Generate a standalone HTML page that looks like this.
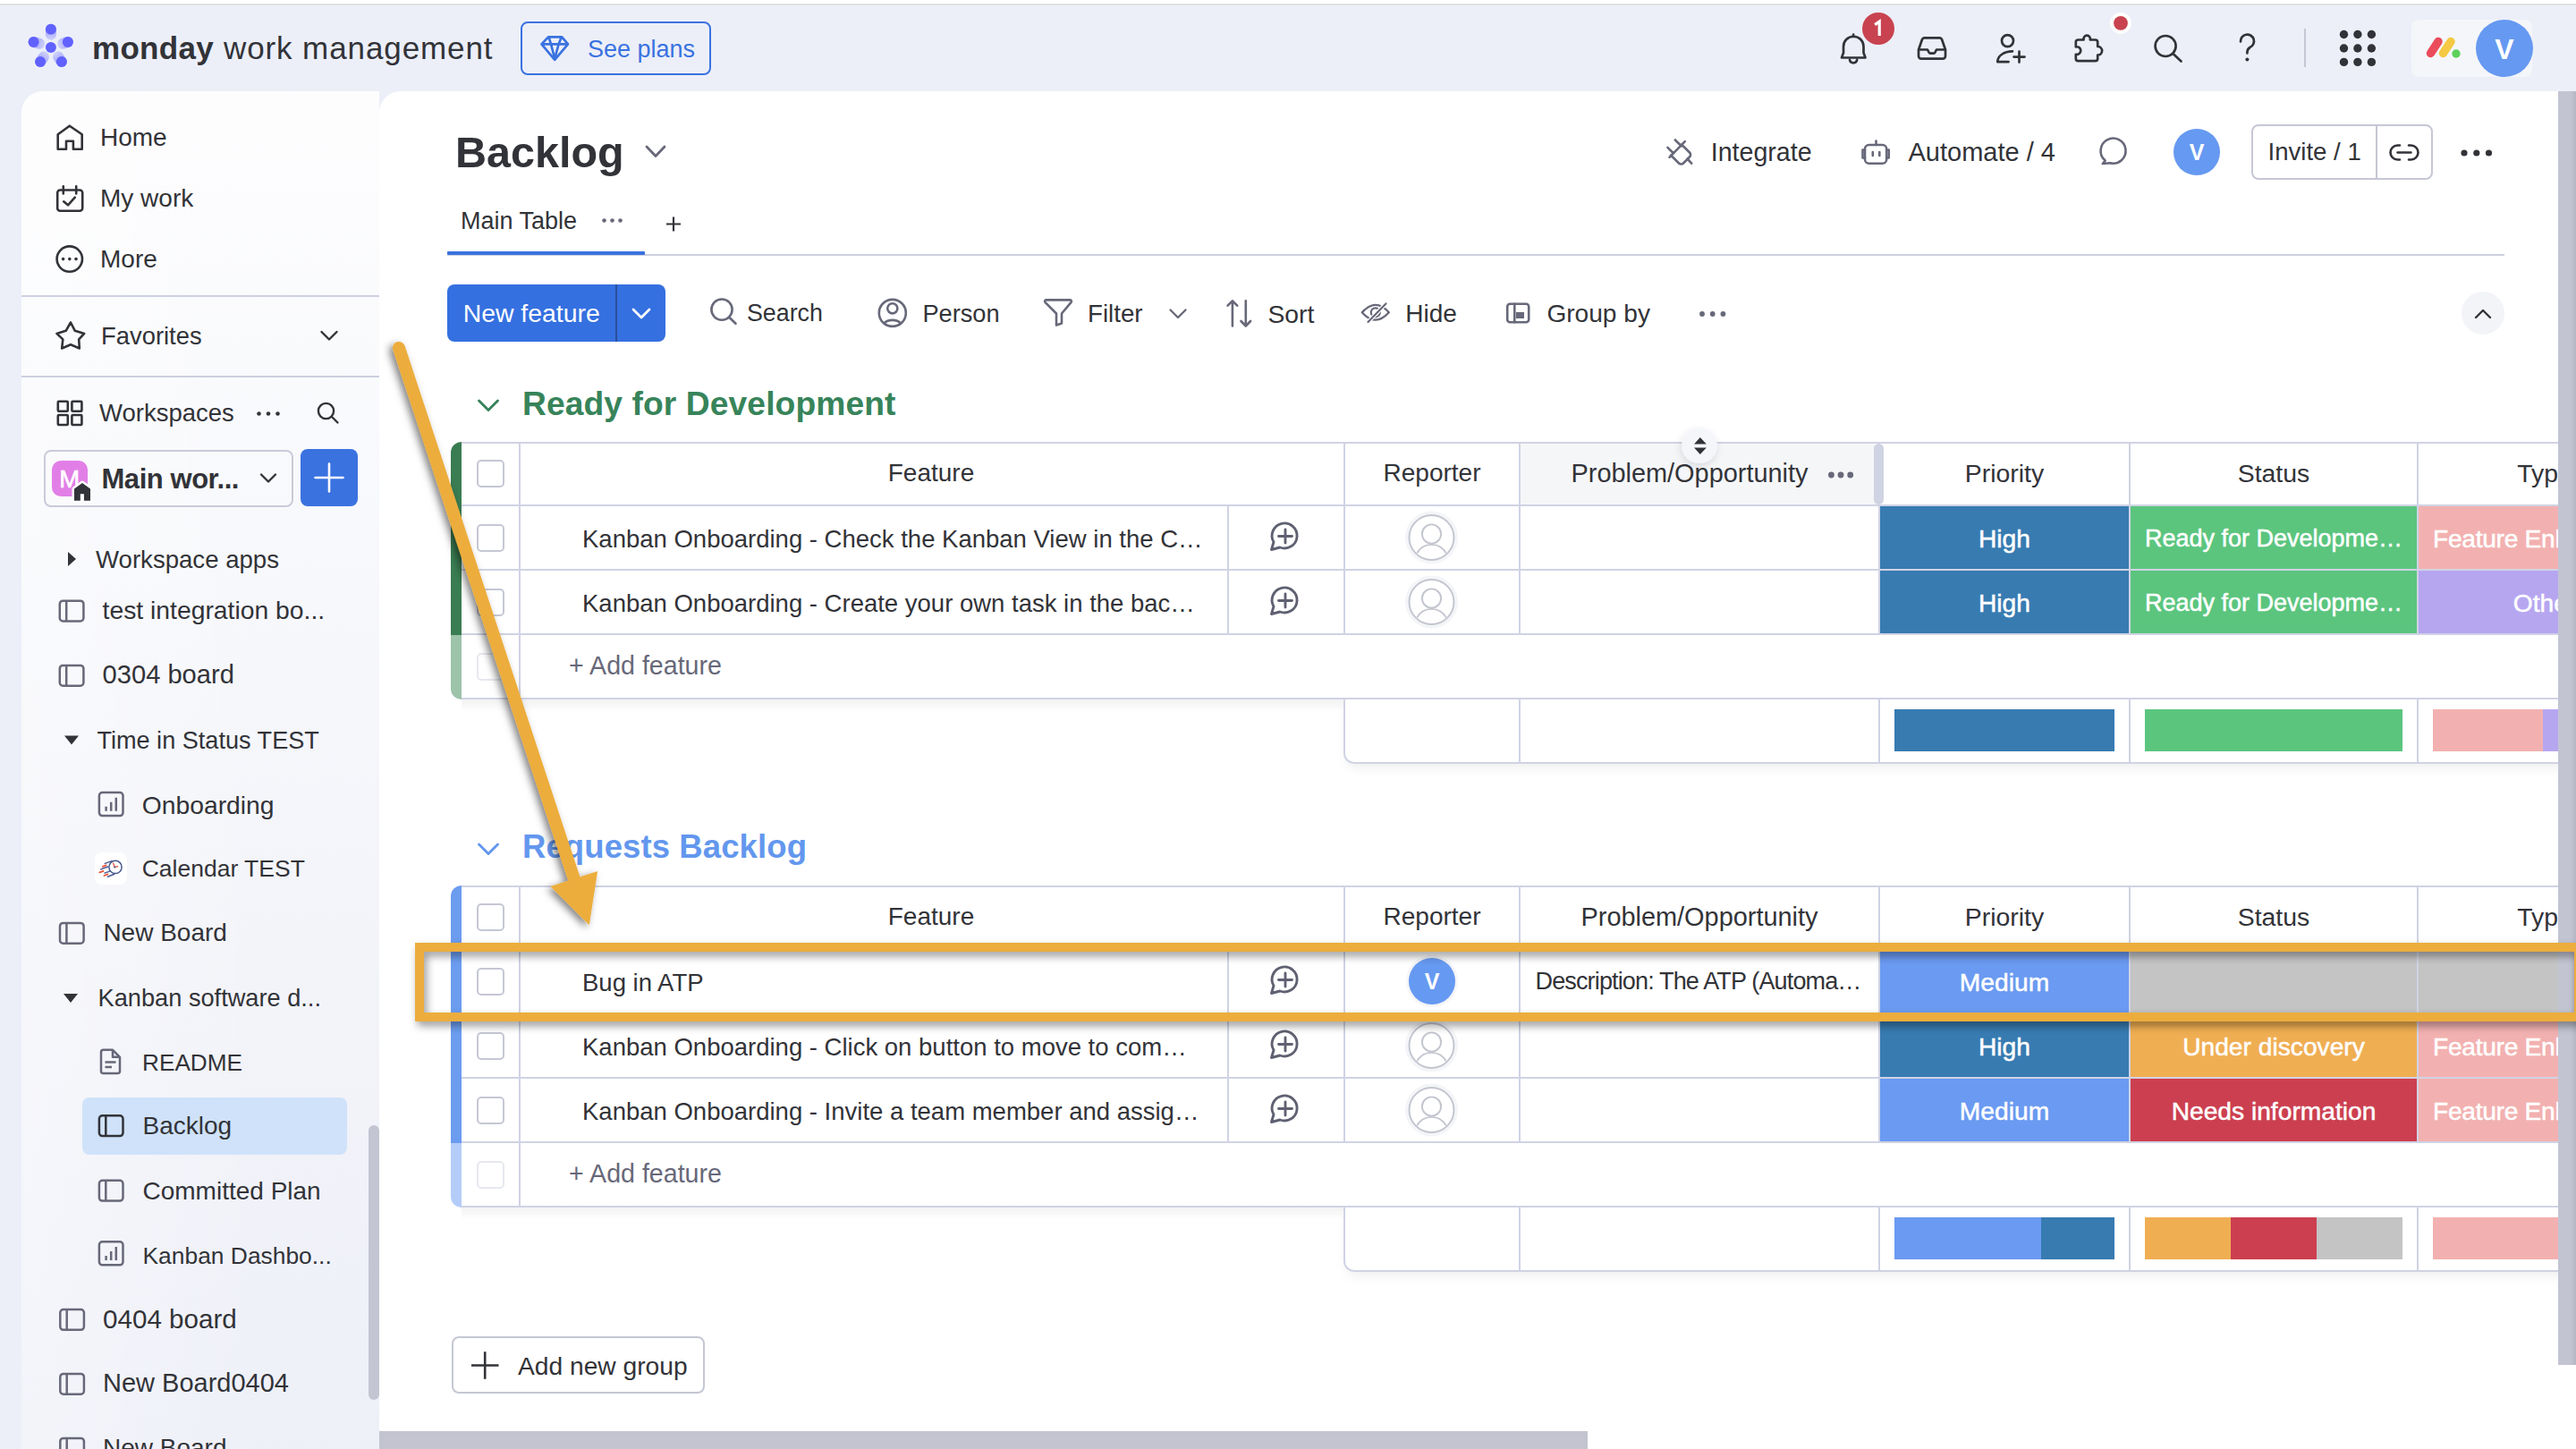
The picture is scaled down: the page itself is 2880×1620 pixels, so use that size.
<!DOCTYPE html>
<html><head><meta charset="utf-8"><title>Backlog</title>
<style>
html,body{margin:0;padding:0;}
body{width:2880px;height:1620px;overflow:hidden;position:relative;background:#eceff8;font-family:"Liberation Sans",sans-serif;}
.a{position:absolute;}
.t{position:absolute;white-space:nowrap;line-height:1;}
svg.ov{position:absolute;left:0;top:0;width:2880px;height:1620px;}
</style></head><body>
<div class="a" style="left:0.0px;top:0.0px;width:2880.0px;height:4.0px;background:#fff"></div>
<div class="a" style="left:0.0px;top:4.0px;width:2880.0px;height:2.0px;background:#dfe1e0"></div>
<div class="t" style="left:103.0px;top:35.9px;font-size:35px;font-weight:700;color:#323338;letter-spacing:0.3px">monday</div>
<div class="t" style="left:250.0px;top:35.9px;font-size:35px;font-weight:400;color:#323338;letter-spacing:0.9px">work management</div>
<div class="a" style="left:582.0px;top:24.0px;width:213.0px;height:60.0px;border:2px solid #3a72e0;border-radius:8px;box-sizing:border-box"></div>
<div class="t" style="left:657.0px;top:41.7px;font-size:27px;font-weight:400;color:#3a72e0;">See plans</div>
<div class="a" style="left:2082.1px;top:13.9px;width:36.0px;height:36.0px;background:#c8434f;border-radius:50%"></div>
<div class="a" style="left:2576.0px;top:32.0px;width:2.0px;height:43.0px;background:#c5c7d4"></div>
<div class="a" style="left:2696.0px;top:22.0px;width:135.0px;height:64.0px;background:#f5f6fa;border-radius:8px"></div>
<div class="a" style="left:2767.9px;top:22.0px;width:64.0px;height:64.0px;background:#6699f1;border-radius:50%"></div>
<div class="t" style="left:2200.0px;width:1200px;text-align:center;top:38.8px;font-size:32px;font-weight:700;color:#fff;">V</div>
<div class="a" style="left:24.0px;top:102.0px;width:400.0px;height:1518.0px;background:linear-gradient(90deg,rgba(255,255,255,0.3),rgba(255,255,255,0) 70%),linear-gradient(180deg,#fdfdfe 0%,#f8f9fc 30%,#f3f4f9 65%,#eef0f8 100%);border-top-left-radius:24px"></div>
<div class="a" style="left:424.0px;top:102.0px;width:2456.0px;height:1518.0px;background:#fff;border-top-left-radius:24px"></div>
<div class="t" style="left:112.0px;top:140.3px;font-size:28px;font-weight:400;color:#323338;">Home</div>
<div class="t" style="left:112.0px;top:208.3px;font-size:28px;font-weight:400;color:#323338;">My work</div>
<div class="t" style="left:112.0px;top:275.8px;font-size:28px;font-weight:400;color:#323338;">More</div>
<div class="a" style="left:24.0px;top:329.5px;width:400.0px;height:2.0px;background:#cdd0e0"></div>
<div class="t" style="left:113.0px;top:361.8px;font-size:27.4px;font-weight:400;color:#323338;">Favorites</div>
<div class="a" style="left:24.0px;top:420.0px;width:400.0px;height:2.0px;background:#cdd0e0"></div>
<div class="t" style="left:111.0px;top:447.7px;font-size:27.5px;font-weight:400;color:#323338;">Workspaces</div>
<div class="a" style="left:49.0px;top:503.0px;width:279.0px;height:64.0px;border:2px solid #c9cbd8;border-radius:8px;box-sizing:border-box"></div>
<div class="a" style="left:58.0px;top:515.0px;width:40.0px;height:40.0px;background:#e27fe7;border-radius:10px"></div>
<div class="t" style="left:66.3px;top:521.7px;font-size:27.5px;font-weight:400;color:#fff;-webkit-text-stroke:0.6px #fff">M</div>
<div class="t" style="left:113.5px;top:519.8px;font-size:31px;font-weight:700;color:#323338;letter-spacing:-0.45px">Main wor...</div>
<div class="a" style="left:336.0px;top:502.0px;width:64.0px;height:64.0px;background:#3a72e0;border-radius:8px"></div>
<div class="t" style="left:107.0px;top:611.6px;font-size:27.6px;font-weight:400;color:#323338;">Workspace apps</div>
<div class="t" style="left:114.6px;top:668.4px;font-size:28.3px;font-weight:400;color:#323338;">test integration bo...</div>
<div class="t" style="left:114.6px;top:739.9px;font-size:29.1px;font-weight:400;color:#323338;">0304 board</div>
<div class="t" style="left:108.4px;top:813.8px;font-size:27.1px;font-weight:400;color:#323338;">Time in Status TEST</div>
<div class="t" style="left:158.7px;top:885.7px;font-size:28.3px;font-weight:400;color:#323338;">Onboarding</div>
<div class="a" style="left:106.0px;top:953.0px;width:36.0px;height:36.0px;background:#fff;border-radius:8px"></div>
<div class="t" style="left:158.7px;top:958.2px;font-size:26.5px;font-weight:400;color:#323338;">Calendar TEST</div>
<div class="t" style="left:115.4px;top:1028.7px;font-size:28px;font-weight:400;color:#323338;">New Board</div>
<div class="t" style="left:109.6px;top:1102.0px;font-size:27.2px;font-weight:400;color:#323338;">Kanban software d...</div>
<div class="t" style="left:159.0px;top:1174.6px;font-size:26.2px;font-weight:400;color:#323338;">README</div>
<div class="a" style="left:92.0px;top:1227.0px;width:296.0px;height:64.0px;background:#cfe2fa;border-radius:8px"></div>
<div class="t" style="left:159.5px;top:1245.3px;font-size:28px;font-weight:400;color:#323338;">Backlog</div>
<div class="t" style="left:159.5px;top:1317.8px;font-size:28px;font-weight:400;color:#323338;">Committed Plan</div>
<div class="t" style="left:159.5px;top:1390.7px;font-size:26.4px;font-weight:400;color:#323338;">Kanban Dashbo...</div>
<div class="t" style="left:115.0px;top:1459.6px;font-size:29.6px;font-weight:400;color:#323338;">0404 board</div>
<div class="t" style="left:115.0px;top:1532.1px;font-size:29px;font-weight:400;color:#323338;">New Board0404</div>
<div class="t" style="left:115.0px;top:1604.9px;font-size:28px;font-weight:400;color:#323338;">New Board</div>
<div class="a" style="left:412.0px;top:1258.0px;width:12.0px;height:307.0px;background:#c3c5d3;border-radius:6px"></div>
<div class="t" style="left:509.0px;top:145.5px;font-size:48.5px;font-weight:700;color:#323338;letter-spacing:0px">Backlog</div>
<div class="t" style="left:1912.7px;top:156.4px;font-size:28.6px;font-weight:400;color:#323338;">Integrate</div>
<div class="t" style="left:2133.5px;top:156.1px;font-size:29px;font-weight:400;color:#323338;">Automate / 4</div>
<div class="a" style="left:2430.0px;top:143.9px;width:51.8px;height:51.8px;background:#6699f1;border-radius:50%"></div>
<div class="t" style="left:1856.0px;width:1200px;text-align:center;top:157.8px;font-size:25px;font-weight:700;color:#fff;">V</div>
<div class="a" style="left:2516.5px;top:138.6px;width:203.0px;height:62.5px;border:2px solid #c5c7d4;border-radius:8px;box-sizing:border-box"></div>
<div class="a" style="left:2656.0px;top:139.0px;width:2.0px;height:62.0px;background:#c5c7d4"></div>
<div class="t" style="left:2535.5px;top:156.2px;font-size:27.6px;font-weight:400;color:#323338;">Invite / 1</div>
<div class="t" style="left:515.0px;top:234.1px;font-size:27px;font-weight:400;color:#323338;">Main Table</div>
<div class="a" style="left:500.0px;top:284.0px;width:2300.0px;height:2.0px;background:#cdd0e0"></div>
<div class="a" style="left:500.0px;top:281.0px;width:221.0px;height:4.0px;background:#3a72e0;border-radius:1px"></div>
<div class="a" style="left:500.0px;top:318.0px;width:244.0px;height:64.0px;background:#3570e0;border-radius:8px"></div>
<div class="a" style="left:688.0px;top:318.0px;width:2.0px;height:64.0px;background:#2a4f9c"></div>
<div class="t" style="left:517.7px;top:336.0px;font-size:28.4px;font-weight:400;color:#fff;">New feature</div>
<div class="a" style="left:1695.4px;top:349.3px;width:9.1px;height:6.3px;background:#676879"></div>
<div class="t" style="left:835.0px;top:337.1px;font-size:26.8px;font-weight:400;color:#323338;">Search</div>
<div class="t" style="left:1031.4px;top:336.8px;font-size:27.2px;font-weight:400;color:#323338;">Person</div>
<div class="t" style="left:1216.0px;top:337.1px;font-size:27.7px;font-weight:400;color:#323338;">Filter</div>
<div class="t" style="left:1417.5px;top:336.5px;font-size:28.3px;font-weight:400;color:#323338;">Sort</div>
<div class="t" style="left:1571.3px;top:336.8px;font-size:28px;font-weight:400;color:#323338;">Hide</div>
<div class="t" style="left:1729.4px;top:336.7px;font-size:28.1px;font-weight:400;color:#323338;">Group by</div>
<div class="a" style="left:2752.0px;top:326.0px;width:48.0px;height:48.0px;background:#f3f4f8;border-radius:50%"></div>
<div class="t" style="left:584.0px;top:432.5px;font-size:37.2px;font-weight:700;color:#37845a;letter-spacing:0.1px">Ready for Development</div>
<div class="a" style="left:1502.0px;top:780.0px;width:1378.0px;height:74.0px;border:2px solid #d0d3e4;border-top:none;border-right:none;border-bottom-left-radius:12px;box-sizing:border-box;box-shadow:0 8px 14px -4px rgba(0,0,0,0.07)"></div>
<div class="a" style="left:516.0px;top:782.0px;width:986.0px;height:14.0px;background:linear-gradient(180deg,rgba(0,0,0,0.05),rgba(0,0,0,0))"></div>
<div class="a" style="left:1700.0px;top:496.0px;width:400.0px;height:68.0px;background:#f5f6f8"></div>
<div class="a" style="left:504.0px;top:494.0px;width:12.0px;height:216.0px;background:#3a7d52;border-top-left-radius:12px"></div>
<div class="a" style="left:504.0px;top:710.0px;width:12.0px;height:72.0px;background:#9dc3aa;border-bottom-left-radius:12px"></div>
<div class="a" style="left:516.0px;top:494.0px;width:2364.0px;height:2.0px;background:#d0d3e4"></div>
<div class="a" style="left:516.0px;top:564.0px;width:2364.0px;height:2.0px;background:#d0d3e4"></div>
<div class="a" style="left:516.0px;top:636.0px;width:2364.0px;height:2.0px;background:#d0d3e4"></div>
<div class="a" style="left:516.0px;top:708.0px;width:2364.0px;height:2.0px;background:#d0d3e4"></div>
<div class="a" style="left:516.0px;top:780.0px;width:2364.0px;height:2.0px;background:#d0d3e4"></div>
<div class="a" style="left:580.0px;top:494.0px;width:2.0px;height:286.0px;background:#d0d3e4"></div>
<div class="a" style="left:1372.0px;top:564.0px;width:2.0px;height:144.0px;background:#d0d3e4"></div>
<div class="a" style="left:1502.0px;top:494.0px;width:2.0px;height:216.0px;background:#d0d3e4"></div>
<div class="a" style="left:1698.0px;top:494.0px;width:2.0px;height:216.0px;background:#d0d3e4"></div>
<div class="a" style="left:1698.0px;top:780.0px;width:2.0px;height:72.0px;background:#d0d3e4"></div>
<div class="a" style="left:2100.0px;top:494.0px;width:2.0px;height:216.0px;background:#d0d3e4"></div>
<div class="a" style="left:2100.0px;top:780.0px;width:2.0px;height:72.0px;background:#d0d3e4"></div>
<div class="a" style="left:2380.0px;top:494.0px;width:2.0px;height:216.0px;background:#d0d3e4"></div>
<div class="a" style="left:2380.0px;top:780.0px;width:2.0px;height:72.0px;background:#d0d3e4"></div>
<div class="a" style="left:2702.0px;top:494.0px;width:2.0px;height:216.0px;background:#d0d3e4"></div>
<div class="a" style="left:2702.0px;top:780.0px;width:2.0px;height:72.0px;background:#d0d3e4"></div>
<div class="a" style="left:532.5px;top:513.5px;width:31.0px;height:31.0px;border:2px solid #c5c7d4;border-radius:5px;box-sizing:border-box;background:#fff"></div>
<div class="t" style="left:441.0px;width:1200px;text-align:center;top:515.3px;font-size:28px;font-weight:400;color:#323338;">Feature</div>
<div class="t" style="left:1001.0px;width:1200px;text-align:center;top:515.3px;font-size:28px;font-weight:400;color:#323338;">Reporter</div>
<div class="t" style="left:1756.5px;top:515.0px;font-size:28.9px;font-weight:400;color:#323338;">Problem/Opportunity</div>
<div class="a" style="left:2094.5px;top:496.0px;width:11.5px;height:67.5px;background:#d0d3e3;border-radius:6px"></div>
<div class="t" style="left:1641.0px;width:1200px;text-align:center;top:515.0px;font-size:28.4px;font-weight:400;color:#323338;">Priority</div>
<div class="t" style="left:1942.0px;width:1200px;text-align:center;top:515.0px;font-size:28.4px;font-weight:400;color:#323338;">Status</div>
<div class="t" style="left:2245.0px;width:1200px;text-align:center;top:515.0px;font-size:28.4px;font-weight:400;color:#323338;">Type</div>
<div class="a" style="left:532.5px;top:585.5px;width:31.0px;height:31.0px;border:2px solid #c5c7d4;border-radius:5px;box-sizing:border-box;background:#fff"></div>
<div class="t" style="left:651.0px;top:588.7px;font-size:27.5px;font-weight:400;color:#323338;">Kanban Onboarding - Check the Kanban View in the C…</div>
<div class="a" style="left:2102.0px;top:566.0px;width:278.0px;height:70.0px;background:#377bb1"></div>
<div class="t" style="left:1641.0px;width:1200px;text-align:center;top:587.6px;font-size:28.2px;font-weight:400;color:#fff;-webkit-text-stroke:0.5px #fff">High</div>
<div class="a" style="left:2382.0px;top:566.0px;width:320.0px;height:70.0px;background:#5bc57e"></div>
<div class="t" style="left:1942.0px;width:1200px;text-align:center;top:588.6px;font-size:27px;font-weight:400;color:#fff;-webkit-text-stroke:0.5px #fff">Ready for Developme…</div>
<div class="a" style="left:2704.0px;top:566.0px;width:176.0px;height:70.0px;background:#f2b1b0"></div>
<div class="t" style="left:2720.0px;top:587.6px;font-size:28.2px;font-weight:400;color:#fff;-webkit-text-stroke:0.5px #fff;letter-spacing:-0.3px">Feature Enh</div>
<div class="a" style="left:532.5px;top:657.5px;width:31.0px;height:31.0px;border:2px solid #c5c7d4;border-radius:5px;box-sizing:border-box;background:#fff"></div>
<div class="t" style="left:651.0px;top:660.7px;font-size:27.5px;font-weight:400;color:#323338;">Kanban Onboarding - Create your own task in the bac…</div>
<div class="a" style="left:2102.0px;top:638.0px;width:278.0px;height:70.0px;background:#377bb1"></div>
<div class="t" style="left:1641.0px;width:1200px;text-align:center;top:659.6px;font-size:28.2px;font-weight:400;color:#fff;-webkit-text-stroke:0.5px #fff">High</div>
<div class="a" style="left:2382.0px;top:638.0px;width:320.0px;height:70.0px;background:#5bc57e"></div>
<div class="t" style="left:1942.0px;width:1200px;text-align:center;top:660.6px;font-size:27px;font-weight:400;color:#fff;-webkit-text-stroke:0.5px #fff">Ready for Developme…</div>
<div class="a" style="left:2704.0px;top:638.0px;width:176.0px;height:70.0px;background:#b6a6f0"></div>
<div class="t" style="left:2245.0px;width:1200px;text-align:center;top:659.6px;font-size:28.2px;font-weight:400;color:#fff;-webkit-text-stroke:0.5px #fff">Other</div>
<div class="a" style="left:532.5px;top:729.5px;width:31.0px;height:31.0px;border:2px solid #e6e8ef;border-radius:5px;box-sizing:border-box;background:#fff"></div>
<div class="t" style="left:636.0px;top:729.8px;font-size:28.6px;font-weight:400;color:#676879;">+ Add feature</div>
<div class="a" style="left:2118.0px;top:792.8px;width:246.0px;height:47.5px;background:#377bb1"></div>
<div class="a" style="left:2398.0px;top:792.8px;width:288.0px;height:47.5px;background:#5bc57e"></div>
<div class="a" style="left:2720.0px;top:792.8px;width:123.0px;height:47.5px;background:#f2b1b0"></div>
<div class="a" style="left:2843.0px;top:792.8px;width:40.0px;height:47.5px;background:#b6a6f0"></div>
<div class="t" style="left:584.0px;top:929.1px;font-size:36.5px;font-weight:700;color:#6397ee;letter-spacing:0.1px">Requests Backlog</div>
<div class="a" style="left:1502.0px;top:1348.0px;width:1378.0px;height:74.0px;border:2px solid #d0d3e4;border-top:none;border-right:none;border-bottom-left-radius:12px;box-sizing:border-box;box-shadow:0 8px 14px -4px rgba(0,0,0,0.07)"></div>
<div class="a" style="left:516.0px;top:1350.0px;width:986.0px;height:14.0px;background:linear-gradient(180deg,rgba(0,0,0,0.05),rgba(0,0,0,0))"></div>
<div class="a" style="left:504.0px;top:990.0px;width:12.0px;height:288.0px;background:#6b9cf0;border-top-left-radius:12px"></div>
<div class="a" style="left:504.0px;top:1278.0px;width:12.0px;height:72.0px;background:#b4cdf8;border-bottom-left-radius:12px"></div>
<div class="a" style="left:516.0px;top:990.0px;width:2364.0px;height:2.0px;background:#d0d3e4"></div>
<div class="a" style="left:516.0px;top:1060.0px;width:2364.0px;height:2.0px;background:#d0d3e4"></div>
<div class="a" style="left:516.0px;top:1132.0px;width:2364.0px;height:2.0px;background:#d0d3e4"></div>
<div class="a" style="left:516.0px;top:1204.0px;width:2364.0px;height:2.0px;background:#d0d3e4"></div>
<div class="a" style="left:516.0px;top:1276.0px;width:2364.0px;height:2.0px;background:#d0d3e4"></div>
<div class="a" style="left:516.0px;top:1348.0px;width:2364.0px;height:2.0px;background:#d0d3e4"></div>
<div class="a" style="left:580.0px;top:990.0px;width:2.0px;height:358.0px;background:#d0d3e4"></div>
<div class="a" style="left:1372.0px;top:1060.0px;width:2.0px;height:216.0px;background:#d0d3e4"></div>
<div class="a" style="left:1502.0px;top:990.0px;width:2.0px;height:288.0px;background:#d0d3e4"></div>
<div class="a" style="left:1698.0px;top:990.0px;width:2.0px;height:288.0px;background:#d0d3e4"></div>
<div class="a" style="left:1698.0px;top:1348.0px;width:2.0px;height:72.0px;background:#d0d3e4"></div>
<div class="a" style="left:2100.0px;top:990.0px;width:2.0px;height:288.0px;background:#d0d3e4"></div>
<div class="a" style="left:2100.0px;top:1348.0px;width:2.0px;height:72.0px;background:#d0d3e4"></div>
<div class="a" style="left:2380.0px;top:990.0px;width:2.0px;height:288.0px;background:#d0d3e4"></div>
<div class="a" style="left:2380.0px;top:1348.0px;width:2.0px;height:72.0px;background:#d0d3e4"></div>
<div class="a" style="left:2702.0px;top:990.0px;width:2.0px;height:288.0px;background:#d0d3e4"></div>
<div class="a" style="left:2702.0px;top:1348.0px;width:2.0px;height:72.0px;background:#d0d3e4"></div>
<div class="a" style="left:532.5px;top:1009.5px;width:31.0px;height:31.0px;border:2px solid #c5c7d4;border-radius:5px;box-sizing:border-box;background:#fff"></div>
<div class="t" style="left:441.0px;width:1200px;text-align:center;top:1011.3px;font-size:28px;font-weight:400;color:#323338;">Feature</div>
<div class="t" style="left:1001.0px;width:1200px;text-align:center;top:1011.3px;font-size:28px;font-weight:400;color:#323338;">Reporter</div>
<div class="t" style="left:1300.0px;width:1200px;text-align:center;top:1011.0px;font-size:28.9px;font-weight:400;color:#323338;">Problem/Opportunity</div>
<div class="t" style="left:1641.0px;width:1200px;text-align:center;top:1011.0px;font-size:28.4px;font-weight:400;color:#323338;">Priority</div>
<div class="t" style="left:1942.0px;width:1200px;text-align:center;top:1011.0px;font-size:28.4px;font-weight:400;color:#323338;">Status</div>
<div class="t" style="left:2245.0px;width:1200px;text-align:center;top:1011.0px;font-size:28.4px;font-weight:400;color:#323338;">Type</div>
<div class="a" style="left:532.5px;top:1081.5px;width:31.0px;height:31.0px;border:2px solid #c5c7d4;border-radius:5px;box-sizing:border-box;background:#fff"></div>
<div class="t" style="left:651.0px;top:1084.7px;font-size:27.5px;font-weight:400;color:#323338;">Bug in ATP</div>
<div class="a" style="left:1571.8px;top:1068.0px;width:58.0px;height:58.0px;background:#f4f5f8;border-radius:50%"></div>
<div class="a" style="left:1575.0px;top:1071.2px;width:51.6px;height:51.6px;background:#6699f1;border-radius:50%"></div>
<div class="t" style="left:1001.0px;width:1200px;text-align:center;top:1084.8px;font-size:25px;font-weight:700;color:#fff;">V</div>
<div class="t" style="left:1716.5px;top:1083.6px;font-size:27px;font-weight:400;color:#323338;letter-spacing:-0.85px">Description: The ATP (Automa…</div>
<div class="a" style="left:2102.0px;top:1062.0px;width:278.0px;height:70.0px;background:#6a9af1"></div>
<div class="t" style="left:1641.0px;width:1200px;text-align:center;top:1083.6px;font-size:28.2px;font-weight:400;color:#fff;-webkit-text-stroke:0.5px #fff">Medium</div>
<div class="a" style="left:2382.0px;top:1062.0px;width:320.0px;height:70.0px;background:#c4c4c4"></div>
<div class="a" style="left:2704.0px;top:1062.0px;width:176.0px;height:70.0px;background:#c4c4c4"></div>
<div class="a" style="left:532.5px;top:1153.5px;width:31.0px;height:31.0px;border:2px solid #c5c7d4;border-radius:5px;box-sizing:border-box;background:#fff"></div>
<div class="t" style="left:651.0px;top:1156.7px;font-size:27.5px;font-weight:400;color:#323338;">Kanban Onboarding - Click on button to move to com…</div>
<div class="a" style="left:2102.0px;top:1134.0px;width:278.0px;height:70.0px;background:#377bb1"></div>
<div class="t" style="left:1641.0px;width:1200px;text-align:center;top:1155.6px;font-size:28.2px;font-weight:400;color:#fff;-webkit-text-stroke:0.5px #fff">High</div>
<div class="a" style="left:2382.0px;top:1134.0px;width:320.0px;height:70.0px;background:#f0ae53"></div>
<div class="t" style="left:1942.0px;width:1200px;text-align:center;top:1155.6px;font-size:28.2px;font-weight:400;color:#fff;-webkit-text-stroke:0.5px #fff">Under discovery</div>
<div class="a" style="left:2704.0px;top:1134.0px;width:176.0px;height:70.0px;background:#f2b1b0"></div>
<div class="t" style="left:2720.0px;top:1155.6px;font-size:28.2px;font-weight:400;color:#fff;-webkit-text-stroke:0.5px #fff;letter-spacing:-0.3px">Feature Enh</div>
<div class="a" style="left:532.5px;top:1225.5px;width:31.0px;height:31.0px;border:2px solid #c5c7d4;border-radius:5px;box-sizing:border-box;background:#fff"></div>
<div class="t" style="left:651.0px;top:1228.7px;font-size:27.5px;font-weight:400;color:#323338;">Kanban Onboarding - Invite a team member and assig…</div>
<div class="a" style="left:2102.0px;top:1206.0px;width:278.0px;height:70.0px;background:#6a9af1"></div>
<div class="t" style="left:1641.0px;width:1200px;text-align:center;top:1227.6px;font-size:28.2px;font-weight:400;color:#fff;-webkit-text-stroke:0.5px #fff">Medium</div>
<div class="a" style="left:2382.0px;top:1206.0px;width:320.0px;height:70.0px;background:#cc3f50"></div>
<div class="t" style="left:1942.0px;width:1200px;text-align:center;top:1227.6px;font-size:28.2px;font-weight:400;color:#fff;-webkit-text-stroke:0.5px #fff">Needs information</div>
<div class="a" style="left:2704.0px;top:1206.0px;width:176.0px;height:70.0px;background:#f2b1b0"></div>
<div class="t" style="left:2720.0px;top:1227.6px;font-size:28.2px;font-weight:400;color:#fff;-webkit-text-stroke:0.5px #fff;letter-spacing:-0.3px">Feature Enh</div>
<div class="a" style="left:532.5px;top:1297.5px;width:31.0px;height:31.0px;border:2px solid #e6e8ef;border-radius:5px;box-sizing:border-box;background:#fff"></div>
<div class="t" style="left:636.0px;top:1297.8px;font-size:28.6px;font-weight:400;color:#676879;">+ Add feature</div>
<div class="a" style="left:2118.0px;top:1360.8px;width:164.0px;height:47.5px;background:#6a9af1"></div>
<div class="a" style="left:2282.0px;top:1360.8px;width:82.0px;height:47.5px;background:#377bb1"></div>
<div class="a" style="left:2398.0px;top:1360.8px;width:96.0px;height:47.5px;background:#f0ae53"></div>
<div class="a" style="left:2494.0px;top:1360.8px;width:96.0px;height:47.5px;background:#cc3f50"></div>
<div class="a" style="left:2590.0px;top:1360.8px;width:96.0px;height:47.5px;background:#c4c4c4"></div>
<div class="a" style="left:2720.0px;top:1360.8px;width:163.0px;height:47.5px;background:#f2b1b0"></div>
<div class="a" style="left:504.5px;top:1494.4px;width:283.5px;height:63.5px;border:2px solid #c5c7d4;border-radius:8px;box-sizing:border-box;background:#fff"></div>
<div class="t" style="left:579.0px;top:1513.1px;font-size:28.2px;font-weight:400;color:#323338;">Add new group</div>
<div class="a" style="left:424.0px;top:1600.0px;width:1351.0px;height:20.0px;background:#c3c4d0"></div>
<div class="a" style="left:2860.0px;top:102.0px;width:20.0px;height:1424.0px;background:linear-gradient(90deg,#c2c4d2 70%,#b5b6c4)"></div>
<svg class="ov" width="2880" height="1620" viewBox="0 0 2880 1620">
<defs>
<linearGradient id="lg" x1="0" y1="0" x2="1" y2="0"><stop offset="0" stop-color="#6161ff" stop-opacity="0.2"/><stop offset="1" stop-color="#6161ff" stop-opacity="0.6"/></linearGradient>
<filter id="sh" x="-50%" y="-50%" width="200%" height="200%"><feDropShadow dx="-1" dy="3" stdDeviation="4" flood-color="#000" flood-opacity="0.12"/></filter>
<filter id="osh" x="-5%" y="-50%" width="110%" height="200%"><feDropShadow dx="3" dy="5" stdDeviation="5" flood-color="#000" flood-opacity="0.4"/></filter>
<filter id="ash" x="-50%" y="-10%" width="200%" height="120%"><feDropShadow dx="-3.5" dy="3" stdDeviation="4.5" flood-color="#000" flood-opacity="0.5"/></filter>
</defs>
<defs>
<linearGradient id="lt0" gradientUnits="userSpaceOnUse" x1="56.9" y1="32.8" x2="56.90" y2="44.80"><stop offset="0" stop-color="#6161ff" stop-opacity="0.55"/><stop offset="1" stop-color="#6161ff" stop-opacity="0.2"/></linearGradient>
<linearGradient id="lt1" gradientUnits="userSpaceOnUse" x1="37.6" y1="46.9" x2="50.07" y2="50.44"><stop offset="0" stop-color="#6161ff" stop-opacity="0.55"/><stop offset="1" stop-color="#6161ff" stop-opacity="0.2"/></linearGradient>
<linearGradient id="lt2" gradientUnits="userSpaceOnUse" x1="75.9" y1="46.9" x2="64.40" y2="50.67"><stop offset="0" stop-color="#6161ff" stop-opacity="0.55"/><stop offset="1" stop-color="#6161ff" stop-opacity="0.2"/></linearGradient>
<linearGradient id="lt3" gradientUnits="userSpaceOnUse" x1="45.1" y1="69.1" x2="52.43" y2="58.58"><stop offset="0" stop-color="#6161ff" stop-opacity="0.55"/><stop offset="1" stop-color="#6161ff" stop-opacity="0.2"/></linearGradient>
<linearGradient id="lt4" gradientUnits="userSpaceOnUse" x1="68.9" y1="69.1" x2="61.57" y2="58.58"><stop offset="0" stop-color="#6161ff" stop-opacity="0.55"/><stop offset="1" stop-color="#6161ff" stop-opacity="0.2"/></linearGradient>
</defs>
<line x1="56.9" y1="32.8" x2="56.9" y2="38.8" stroke="url(#lt0)" stroke-width="12" stroke-linecap="round"/>
<line x1="37.6" y1="46.9" x2="44.3" y2="48.8" stroke="url(#lt1)" stroke-width="12" stroke-linecap="round"/>
<line x1="75.9" y1="46.9" x2="70.1" y2="48.8" stroke="url(#lt2)" stroke-width="12" stroke-linecap="round"/>
<line x1="45.1" y1="69.1" x2="49" y2="63.5" stroke="url(#lt3)" stroke-width="12" stroke-linecap="round"/>
<line x1="68.9" y1="69.1" x2="65" y2="63.5" stroke="url(#lt4)" stroke-width="12" stroke-linecap="round"/>
<circle cx="56.9" cy="32.8" r="6" fill="#6161ff"/>
<circle cx="37.6" cy="46.9" r="6" fill="#6161ff"/>
<circle cx="75.9" cy="46.9" r="6" fill="#6161ff"/>
<circle cx="45.1" cy="69.1" r="6" fill="#6161ff"/>
<circle cx="68.9" cy="69.1" r="6" fill="#6161ff"/>
<circle cx="56.9" cy="52.9" r="6" fill="#6161ff"/>
<g fill="none" stroke="#3a72e0" stroke-width="2.7" stroke-linejoin="round"><path d="M605.5 49.4 L613 41.3 H628.2 L635 49.4 L620.2 66.8 Z M605.5 49.4 H635 M613.5 41.5 L616 49.4 L620.2 65.5 M627.7 41.5 L624.6 49.4 L620.2 65.5"/></g>
<g fill="none" stroke="#323338" stroke-width="2.7" stroke-linecap="round" stroke-linejoin="round">
<path d="M2059 64.5 H2085.5 L2083.5 59 V52 A11.2 11.2 0 0 0 2061 52 V59 Z M2072.1 38.6 V41 M2068 67 A4.2 4.2 0 0 0 2076.2 67"/>
<path d="M2151.5 42.3 H2168.5 A2.5 2.5 0 0 1 2171 44 L2175 55.5 V62.5 A3 3 0 0 1 2172 65.6 H2148 A3 3 0 0 1 2145 62.5 V55.5 L2149 44 A2.5 2.5 0 0 1 2151.5 42.3 Z M2145.5 55.5 H2155 L2156.5 58.5 A2 2 0 0 0 2158.3 59.6 H2161.7 A2 2 0 0 0 2163.5 58.5 L2165 55.5 H2174.5"/>
<circle cx="2244.5" cy="45.6" r="6.5"/><path d="M2245.5 69.2 H2233.3 A16.5 11.7 0 0 1 2250 57.3 M2251.5 63.6 H2263.5 M2257.5 57.6 V69.6"/>
<path d="M2323.5 44.5 H2329.6 A3.75 3.75 0 1 1 2336.8 44.5 H2342.5 A2.7 2.7 0 0 1 2345.2 47.2 V51.9 A4.9 4.9 0 0 1 2345.2 61.7 V65.5 A2.7 2.7 0 0 1 2342.5 68.2 H2323.5 A2.7 2.7 0 0 1 2320.8 65.5 V60.8 A4.35 4.35 0 1 0 2320.8 52.4 V47.2 A2.7 2.7 0 0 1 2323.5 44.5 Z"/>
<circle cx="2421.1" cy="51.5" r="11.5"/><path d="M2429.5 60 L2438.5 68.5"/>
<path d="M2505 46.5 A7.5 7.5 0 1 1 2515.5 53 Q2512.4 55 2512.4 58.5 V59.5"/>
</g>
<circle cx="2512.4" cy="66.4" r="2" fill="#323338"/>
<path d="M2096.2 27.6 L2101.2 24 V40" fill="none" stroke="#fff" stroke-width="3.2" stroke-linejoin="miter"/>
<circle cx="2371" cy="25.8" r="11.9" fill="#fff"/><circle cx="2371" cy="25.8" r="7.9" fill="#c8434f"/>
<circle cx="2620.5" cy="38.5" r="4.7" fill="#323338"/>
<circle cx="2635.9" cy="38.5" r="4.7" fill="#323338"/>
<circle cx="2651.4" cy="38.5" r="4.7" fill="#323338"/>
<circle cx="2620.5" cy="54" r="4.7" fill="#323338"/>
<circle cx="2635.9" cy="54" r="4.7" fill="#323338"/>
<circle cx="2651.4" cy="54" r="4.7" fill="#323338"/>
<circle cx="2620.5" cy="69.4" r="4.7" fill="#323338"/>
<circle cx="2635.9" cy="69.4" r="4.7" fill="#323338"/>
<circle cx="2651.4" cy="69.4" r="4.7" fill="#323338"/>
<g stroke-linecap="round" stroke-width="9.5"><line x1="2717.5" y1="59.5" x2="2726" y2="46.5" stroke="#ea4c5b"/><line x1="2731.5" y1="59.5" x2="2740" y2="46.5" stroke="#f5c942"/></g><circle cx="2746" cy="60" r="4.7" fill="#5dd05c"/>
<g fill="none" stroke="#323338" stroke-width="2.6" stroke-linecap="round" stroke-linejoin="round">
<path d="M64.7 166.7 V150.2 L77.8 140.7 L91.7 150.2 V166.7 H81.9 V157.8 H74 V166.7 Z"/>
<rect x="64.2" y="212.5" width="28" height="23.3" rx="3"/><path d="M70.8 208.3 V216.5 M85.2 208.3 V216.5 M71.2 225.3 L76 229.3 L83.8 220.7"/>
<circle cx="77.8" cy="289.6" r="14.2"/>
<path d="M79 360.5 L83.8 369.8 L94.2 372.9 L88.2 379.4 L88.8 389.5 L79 385.3 L69.2 389.5 L70.3 379.4 L63.4 372.9 L73.7 369.8 Z"/>
<rect x="64.8" y="448.8" width="11" height="11" rx="1"/><rect x="80.4" y="448.8" width="11" height="11" rx="1"/><rect x="64.8" y="464" width="11" height="11" rx="1"/><rect x="80.4" y="464" width="11" height="11" rx="1"/>
<path d="M359.5 371 L368 379.5 L376.5 371" stroke-width="2.4"/>
<path d="M292 530.5 L300 538.5 L308 530.5" stroke-width="2.4"/>
<circle cx="364.5" cy="459.5" r="8.6" stroke-width="2.4"/><path d="M371 466 L377.5 472.5" stroke-width="2.4"/>
</g>
<circle cx="289.5" cy="462.5" r="2.3" fill="#323338"/>
<circle cx="300" cy="462.5" r="2.3" fill="#323338"/>
<circle cx="310.5" cy="462.5" r="2.3" fill="#323338"/>
<circle cx="70.6" cy="289.6" r="1.8" fill="#323338"/>
<circle cx="77.8" cy="289.6" r="1.8" fill="#323338"/>
<circle cx="85" cy="289.6" r="1.8" fill="#323338"/>
<path d="M83 559.7 V546.6 L92 540.1 L101 546.6 V559.7 H93.9 V552.2 H89.8 V559.7 Z" fill="#323338" stroke="#fff" stroke-width="5" stroke-linejoin="round" paint-order="stroke"/>
<path d="M352.5 534 H383.5 M368 518.5 V549.5" stroke="#fff" stroke-width="2.6" stroke-linecap="round"/>
<path d="M76 617 L85 625 L76 633 Z" fill="#323338"/>
<g fill="none" stroke="#676879" stroke-width="2.5"><rect x="66.8" y="671.6999999999999" width="26.6" height="22.8" rx="3.5"/><path d="M74.2 671.6999999999999 V694.5"/></g>
<g fill="none" stroke="#676879" stroke-width="2.5"><rect x="66.8" y="743.9" width="26.6" height="22.8" rx="3.5"/><path d="M74.2 743.9 V766.7"/></g>
<path d="M72 822.6 L88 822.6 L80 832.6 Z" fill="#323338"/>
<g fill="none" stroke="#676879" stroke-width="2.5"><rect x="110.89999999999999" y="886.0999999999999" width="26.6" height="26" rx="3.5"/><path d="M118.6 906.8 V901.8 M124.19999999999999 906.8 V896.8 M129.79999999999998 906.8 V891.8"/></g>
<g fill="none" stroke-linecap="round"><path d="M117.3 965.4 L125 962.6 M112.8 971.9 L120.6 969 M116.9 976.1 L122.6 974.1 M120.4 980.2 L127.8 977.2" stroke="#4a5a8f" stroke-width="1.5"/><circle cx="129" cy="969.4" r="7.1" fill="#fff" stroke="#4a5a8f" stroke-width="1.5"/><path d="M114.8 968.8 L118.6 967.4 M111.4 975.4 L115.5 973.8 M116.4 979 L120.5 977.4" stroke="#e8553a" stroke-width="1.8"/><path d="M126.6 965.2 L128.3 969.5 L131.6 968.6" stroke="#e8553a" stroke-width="1.3"/><circle cx="128.3" cy="969.5" r="1.1" fill="#4a5a8f"/></g>
<g fill="none" stroke="#676879" stroke-width="2.5"><rect x="67.0" y="1031.8999999999999" width="26.6" height="22.8" rx="3.5"/><path d="M74.4 1031.8999999999999 V1054.6999999999998"/></g>
<path d="M71 1111 L87 1111 L79 1121 Z" fill="#323338"/>
<g fill="none" stroke="#676879" stroke-width="2.5" stroke-linejoin="round"><path d="M115 1173.8 H126 L134 1181.8 V1197.5 A2.5 2.5 0 0 1 131.5 1200 H115.5 A2.5 2.5 0 0 1 113 1197.5 V1176.3 A2.5 2.5 0 0 1 115.5 1173.8 Z M126 1173.8 V1181.8 H134"/><path d="M117.5 1187.5 H129.5 M117.5 1193 H125"/></g>
<g fill="none" stroke="#323338" stroke-width="2.5"><rect x="110.89999999999999" y="1247.3" width="26.6" height="22.8" rx="3.5"/><path d="M118.3 1247.3 V1270.1"/></g>
<g fill="none" stroke="#676879" stroke-width="2.5"><rect x="110.89999999999999" y="1319.8" width="26.6" height="22.8" rx="3.5"/><path d="M118.3 1319.8 V1342.6"/></g>
<g fill="none" stroke="#676879" stroke-width="2.5"><rect x="110.89999999999999" y="1388.3" width="26.6" height="26" rx="3.5"/><path d="M118.6 1409 V1404 M124.19999999999999 1409 V1399 M129.79999999999998 1409 V1394"/></g>
<g fill="none" stroke="#676879" stroke-width="2.5"><rect x="67.3" y="1464.0" width="26.6" height="22.8" rx="3.5"/><path d="M74.7 1464.0 V1486.8"/></g>
<g fill="none" stroke="#676879" stroke-width="2.5"><rect x="67.3" y="1535.8999999999999" width="26.6" height="22.8" rx="3.5"/><path d="M74.7 1535.8999999999999 V1558.6999999999998"/></g>
<g fill="none" stroke="#676879" stroke-width="2.5"><rect x="67.3" y="1607.8999999999999" width="26.6" height="22.8" rx="3.5"/><path d="M74.7 1607.8999999999999 V1630.6999999999998"/></g>
<path d="M723 164 L733 174.5 L743 164" fill="none" stroke="#676879" stroke-width="2.8" stroke-linecap="round" stroke-linejoin="round"/>
<g fill="none" stroke="#676879" stroke-width="2.6" stroke-linecap="round" stroke-linejoin="round">
<path d="M1883.8 158.1 L1866.5 175.9 M1872.8 156.5 L1879.8 163.3 M1864.4 164.9 L1871 171.5 M1880 161.5 L1889 170.5 A3.5 3.5 0 0 1 1889 175.5 L1882 182.5 A3.5 3.5 0 0 1 1877 182.5 L1868 173.5 M1886.4 177.5 L1891.2 182.7"/>
<rect x="2085" y="162" width="24.2" height="20.7" rx="4.5"/><path d="M2097.5 157.6 V162 M2085 167.5 H2082.5 V176.5 H2085 M2109.2 167.5 H2111.7 V176.5 H2109.2 M2093.8 170 V174 M2101.3 170 V174"/>
<path d="M2353.7 179.5 A14 14 0 1 1 2359 182.2 L2350.8 183 Z"/>
</g>
<g fill="none" stroke="#323338" stroke-width="2.6" stroke-linecap="round"><path d="M2683 162.5 H2680.5 A8 8 0 0 0 2680.5 178.5 H2683 M2693 162.5 H2695.5 A8 8 0 0 1 2695.5 178.5 H2693 M2680.5 170.5 H2695.5"/></g>
<circle cx="2755" cy="171" r="3.6" fill="#323338"/>
<circle cx="2768.8" cy="171" r="3.6" fill="#323338"/>
<circle cx="2782.5" cy="171" r="3.6" fill="#323338"/>
<circle cx="675.5" cy="246.5" r="2.3" fill="#676879"/>
<circle cx="684.5" cy="246.5" r="2.3" fill="#676879"/>
<circle cx="693.5" cy="246.5" r="2.3" fill="#676879"/>
<path d="M745 250.5 H761 M753 242.5 V258.5" stroke="#323338" stroke-width="2.2"/>
<path d="M708 346 L717 355 L726 346" fill="none" stroke="#fff" stroke-width="2.8" stroke-linecap="round" stroke-linejoin="round"/>
<g fill="none" stroke="#676879" stroke-width="2.6" stroke-linecap="round" stroke-linejoin="round">
<circle cx="807" cy="346.1" r="11.6"/><path d="M815.5 355 L822.5 361.8"/>
<circle cx="997.8" cy="349.9" r="15"/><circle cx="997.8" cy="344.8" r="5.6"/><path d="M988.5 361.5 A11 8 0 0 1 1007 361.5"/>
<path d="M1169.5 335.4 H1196.5 A1.5 1.5 0 0 1 1197.6 337.8 L1187 350.5 V361.5 L1181 363.5 V350.5 L1168.4 337.8 A1.5 1.5 0 0 1 1169.5 335.4 Z"/>
<path d="M1308.5 346.5 L1317 355 L1325.5 346.5" stroke-width="2.3"/>
<path d="M1377.9 336.5 V364.5 M1372.6 341.7 L1377.9 336.3 L1383.2 341.7 M1392.8 336.3 V364.5 M1387.5 359 L1392.8 364.5 L1398.1 359"/>
<path d="M1522.8 349.3 Q1537.8 332.5 1552.8 349.3 Q1537.8 366 1522.8 349.3 Z" stroke-width="2.3"/><circle cx="1537.8" cy="349.3" r="5" stroke-width="2.2"/><path d="M1529.5 360 L1549.5 339.4" stroke="#fff" stroke-width="4.5"/><path d="M1529.5 360 L1549.5 339.4" stroke-width="2.2"/>
<rect x="1685.2" y="339.8" width="24" height="20.5" rx="3"/><path d="M1693.3 339.8 V360.3"/>
</g>
<circle cx="1903" cy="351" r="2.9" fill="#676879"/>
<circle cx="1914.7" cy="351" r="2.9" fill="#676879"/>
<circle cx="1926.4" cy="351" r="2.9" fill="#676879"/>
<path d="M2768 355 L2776 347 L2784 355" fill="none" stroke="#323338" stroke-width="2.4" stroke-linecap="round" stroke-linejoin="round"/>
<path d="M535.5 448 L546 458.5 L556.5 448" fill="none" stroke="#37845a" stroke-width="2.9" stroke-linecap="round" stroke-linejoin="round"/>
<circle cx="2047.4" cy="531" r="3.4" fill="#676879"/>
<circle cx="2058" cy="531" r="3.4" fill="#676879"/>
<circle cx="2068.7" cy="531" r="3.4" fill="#676879"/>
<g fill="none" stroke="#5f6172" stroke-width="2.9" stroke-linecap="round" stroke-linejoin="round"><path d="M1424 606.0 A14 14 0 1 1 1431 612.0 L1421.5 614.5 Z"/><path d="M1429.5 599.5 H1444.5 M1437 592.0 V607.0"/></g>
<circle cx="1600.5" cy="601" r="29.5" fill="#f4f5f8"/><circle cx="1600.5" cy="601" r="25" fill="#fff" stroke="#c3c5cf" stroke-width="1.9"/>
<circle cx="1600.5" cy="597" r="10.6" fill="none" stroke="#c3c5cf" stroke-width="1.9"/><path d="M1584.3 618.4 A18.5 18.5 0 0 1 1616.7 618.4" fill="none" stroke="#c3c5cf" stroke-width="1.9"/>
<g fill="none" stroke="#5f6172" stroke-width="2.9" stroke-linecap="round" stroke-linejoin="round"><path d="M1424 678.0 A14 14 0 1 1 1431 684.0 L1421.5 686.5 Z"/><path d="M1429.5 671.5 H1444.5 M1437 664.0 V679.0"/></g>
<circle cx="1600.5" cy="673" r="29.5" fill="#f4f5f8"/><circle cx="1600.5" cy="673" r="25" fill="#fff" stroke="#c3c5cf" stroke-width="1.9"/>
<circle cx="1600.5" cy="669" r="10.6" fill="none" stroke="#c3c5cf" stroke-width="1.9"/><path d="M1584.3 690.4 A18.5 18.5 0 0 1 1616.7 690.4" fill="none" stroke="#c3c5cf" stroke-width="1.9"/>
<circle cx="1900" cy="498.2" r="19.9" fill="#f5f6fa" filter="url(#sh)"/>
<path d="M1894 496.4 L1900.8 488.9 L1907.8 496.4 Z M1894 500.6 L1907.8 500.6 L1900.8 507.9 Z" fill="#323338"/>
<path d="M535.5 944 L546 954.5 L556.5 944" fill="none" stroke="#6397ee" stroke-width="2.9" stroke-linecap="round" stroke-linejoin="round"/>
<g fill="none" stroke="#5f6172" stroke-width="2.9" stroke-linecap="round" stroke-linejoin="round"><path d="M1424 1102.0 A14 14 0 1 1 1431 1108.0 L1421.5 1110.5 Z"/><path d="M1429.5 1095.5 H1444.5 M1437 1088.0 V1103.0"/></g>
<g fill="none" stroke="#5f6172" stroke-width="2.9" stroke-linecap="round" stroke-linejoin="round"><path d="M1424 1174.0 A14 14 0 1 1 1431 1180.0 L1421.5 1182.5 Z"/><path d="M1429.5 1167.5 H1444.5 M1437 1160.0 V1175.0"/></g>
<circle cx="1600.5" cy="1169" r="29.5" fill="#f4f5f8"/><circle cx="1600.5" cy="1169" r="25" fill="#fff" stroke="#c3c5cf" stroke-width="1.9"/>
<circle cx="1600.5" cy="1165" r="10.6" fill="none" stroke="#c3c5cf" stroke-width="1.9"/><path d="M1584.3 1186.4 A18.5 18.5 0 0 1 1616.7 1186.4" fill="none" stroke="#c3c5cf" stroke-width="1.9"/>
<g fill="none" stroke="#5f6172" stroke-width="2.9" stroke-linecap="round" stroke-linejoin="round"><path d="M1424 1246.0 A14 14 0 1 1 1431 1252.0 L1421.5 1254.5 Z"/><path d="M1429.5 1239.5 H1444.5 M1437 1232.0 V1247.0"/></g>
<circle cx="1600.5" cy="1241" r="29.5" fill="#f4f5f8"/><circle cx="1600.5" cy="1241" r="25" fill="#fff" stroke="#c3c5cf" stroke-width="1.9"/>
<circle cx="1600.5" cy="1237" r="10.6" fill="none" stroke="#c3c5cf" stroke-width="1.9"/><path d="M1584.3 1258.4 A18.5 18.5 0 0 1 1616.7 1258.4" fill="none" stroke="#c3c5cf" stroke-width="1.9"/>
<path d="M527 1526.5 H557.5 M542.2 1511.3 V1541.7" stroke="#323338" stroke-width="2.6"/>
<g filter="url(#osh)"><path fill="#ecad3d" fill-rule="evenodd" d="M464 1054 H2890 V1142 H464 Z M474 1064 V1132 H2878 V1064 Z"/></g>
<g filter="url(#ash)"><line x1="446" y1="389" x2="641.2" y2="980.6" stroke="#ecad3d" stroke-width="14" stroke-linecap="round"/><path fill="#ecad3d" d="M668.1 973.9 L658.8 1034.2 L615.5 991.1 Z"/></g>
</svg>
</body></html>
